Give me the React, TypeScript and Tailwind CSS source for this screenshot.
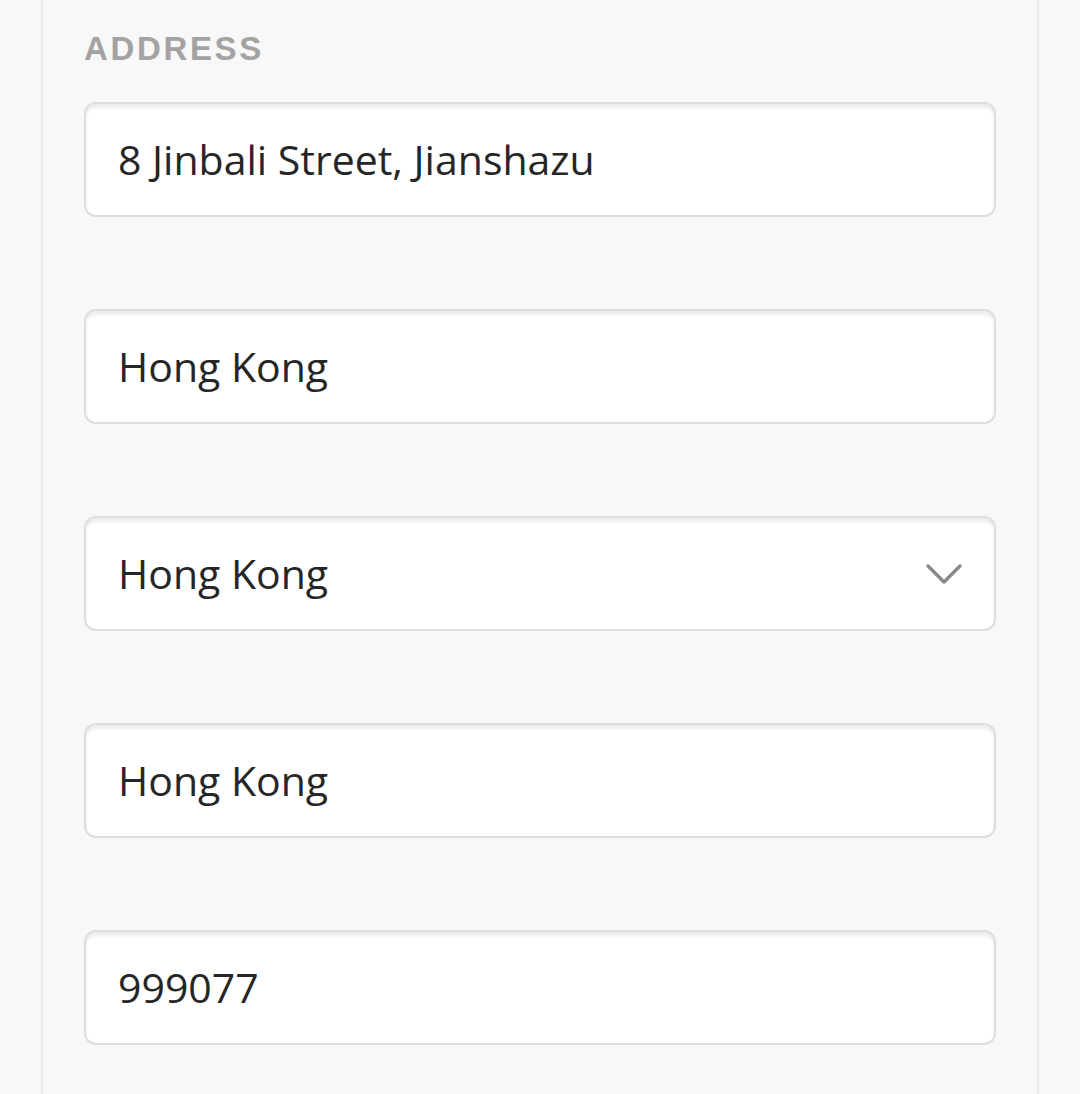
export default function App() {
  const fields: { value: string; select?: boolean }[] = [
    { value: "8 Jinbali Street, Jianshazu" },
    { value: "Hong Kong" },
    { value: "Hong Kong", select: true },
    { value: "Hong Kong" },
    { value: "999077" },
  ];

  return (
    <div className="min-h-[1094px] bg-[#f8f8f8] font-['Open_Sans',sans-serif]">
      <div className="ml-[41px] w-[998px] min-h-[1094px] border-x-2 border-[#ececec] bg-[#f8f8f8] px-[41px] pt-[30px]">
        <h2 className="font-['Liberation_Sans',sans-serif] text-[33px] font-bold leading-[38px] tracking-[0.08em] text-[#a3a3a3]">
          ADDRESS
        </h2>
        <div className="mt-[34px] flex flex-col gap-[92px]">
          {fields.map((f, i) => (
            <div
              key={i}
              className="flex h-[115px] items-center rounded-[12px] border-2 border-[#dddde1] bg-white pl-[32px] pr-[32px] shadow-[inset_0_4px_3px_rgba(0,0,0,0.07)]"
            >
              <span className="flex-1 text-[41px] leading-none text-[#262626]">
                {f.value}
              </span>
              {f.select && (
                <svg width="36" height="22" viewBox="0 0 36 22" fill="none">
                  <path
                    d="M2 3 L18 19 L34 3"
                    stroke="#888"
                    strokeWidth="3.2"
                    strokeLinecap="round"
                    strokeLinejoin="round"
                  />
                </svg>
              )}
            </div>
          ))}
        </div>
      </div>
    </div>
  );
}
